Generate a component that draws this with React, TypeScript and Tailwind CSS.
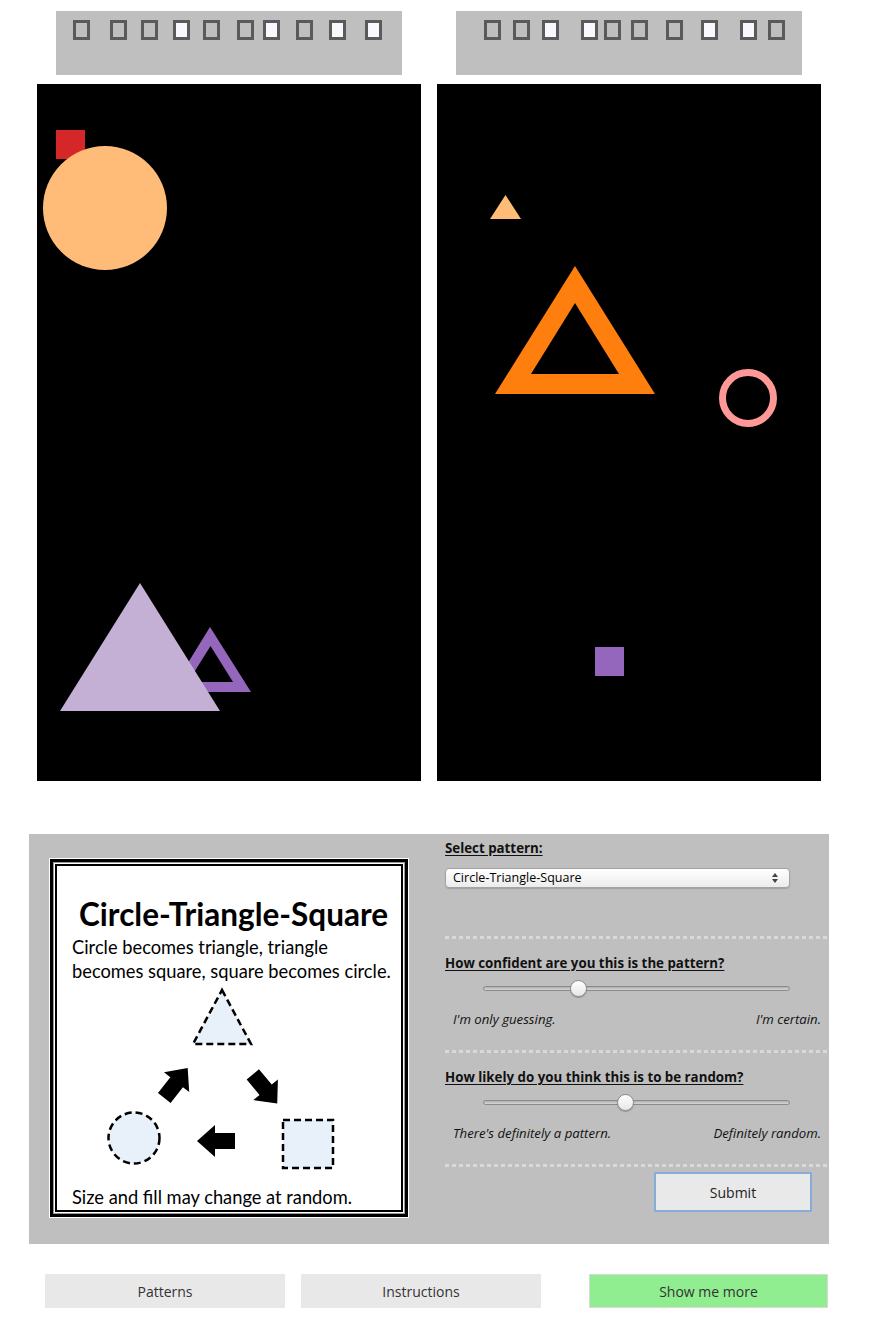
const leftMarks = [
  { ml: "ml-[17px]", on: false },
  { ml: "ml-[20px]", on: false },
  { ml: "ml-[14px]", on: false },
  { ml: "ml-[15px]", on: true },
  { ml: "ml-[13px]", on: false },
  { ml: "ml-[17px]", on: false },
  { ml: "ml-[9px]", on: true },
  { ml: "ml-[16px]", on: false },
  { ml: "ml-[16px]", on: true },
  { ml: "ml-[19px]", on: true },
]

const rightMarks = [
  { ml: "ml-[28px]", on: false },
  { ml: "ml-[12px]", on: false },
  { ml: "ml-[12px]", on: true },
  { ml: "ml-[22px]", on: true },
  { ml: "ml-[6px]", on: false },
  { ml: "ml-[10px]", on: false },
  { ml: "ml-[18px]", on: false },
  { ml: "ml-[18px]", on: true },
  { ml: "ml-[22px]", on: true },
  { ml: "ml-[11px]", on: false },
]

function MarkBar({ marks }: { marks: { ml: string; on: boolean }[] }) {
  return (
    <div className="mx-[19px] h-[64px] bg-[#bfbfbf] flex items-start pt-[9px]">
      {marks.map((m, i) => (
        <div
          key={i}
          className={`${m.ml} w-[17px] h-[20px] border-[3px] border-[#5a5a5a] ${m.on ? "bg-[#f8f8ff]" : ""}`}
        ></div>
      ))}
    </div>
  )
}

function LeftCanvas() {
  return (
    <svg className="block" width="384" height="697" viewBox="0 0 384 697">
      <rect width="384" height="697" fill="#000" />
      <rect x="19" y="46" width="29" height="29" fill="#d62728" />
      <circle cx="68" cy="124" r="62" fill="#ffbb78" />
      {/* outline triangle sits behind the filled one */}
      <polygon points="133,608 214,608 173,543" fill="#9467bd" />
      <polygon points="151,598 196,598 173.5,562" fill="#000" />
      <polygon points="23,627 183,627 103,499" fill="#c5b0d5" />
    </svg>
  )
}

function RightCanvas() {
  return (
    <svg className="block" width="384" height="697" viewBox="0 0 384 697">
      <rect width="384" height="697" fill="#000" />
      <polygon points="53,135 84,135 68.5,111" fill="#ffbb78" />
      <polygon points="58,310 218,310 138,182" fill="#ff7f0e" />
      <polygon points="94,290 182,290 138,219" fill="#000" />
      <circle cx="311" cy="314" r="25.5" fill="none" stroke="#ff9896" strokeWidth="7" />
      <rect x="158" y="563" width="29" height="29" fill="#9467bd" />
    </svg>
  )
}

function Arrow({ x, y, angle }: { x: number; y: number; angle: number }) {
  return (
    <polygon
      points="-19,-8 1,-8 1,-16 19,0 1,16 1,8 -19,8"
      fill="#000"
      transform={`translate(${x} ${y}) rotate(${angle})`}
    />
  )
}

function PatternCard() {
  return (
    <div className="w-[360px] h-[360px] bg-white p-px">
      <div className="h-full border-[3px] border-black bg-[#999] p-px">
        <div className="h-full bg-white p-px">
          <div className="h-full border-2 border-black flex flex-col font-['Lato',sans-serif] text-black">
            <div className="pl-[22px] pt-[30px] text-[31.5px] leading-[36px] font-bold whitespace-nowrap">Circle-Triangle-Square</div>
            <div className="pl-[15px] mt-[3px] text-[18.3px] leading-[24px] whitespace-nowrap">
              Circle becomes triangle, triangle
              <br />
              becomes square, square becomes circle.
            </div>
            <svg className="block mt-[2px]" width="344" height="188" viewBox="0 0 344 188">
              <g fill="#e8f0f9" stroke="#000" strokeWidth="2.5" strokeDasharray="7 4">
                <polygon points="165,5 194,59 136,59" />
                <circle cx="77" cy="153" r="25.5" />
                <rect x="226" y="135" width="50" height="48" />
              </g>
              <Arrow x={119} y={98} angle={-52} />
              <Arrow x={208} y={104} angle={50} />
              <Arrow x={159} y={156} angle={180} />
            </svg>
            <div className="pl-[15px] mt-[12px] text-[18.3px] leading-[24px] whitespace-nowrap">Size and fill may change at random.</div>
          </div>
        </div>
      </div>
    </div>
  )
}

function Dots() {
  return <div className="h-[3px] bg-[linear-gradient(90deg,#d9d9d9_4px,transparent_4px)] bg-[size:7px_3px]"></div>
}

function Slider({ pos }: { pos: string }) {
  return (
    <div className="ml-[38px] w-[307px] h-[17px] relative flex items-center">
      <div className="w-full h-[5px] rounded-full border border-[#8a8a8a] bg-gradient-to-b from-[#b0b0b0] to-[#d6d6d6]"></div>
      <div
        className={`absolute ${pos} top-0 w-[17px] h-[17px] rounded-full border border-[#8c8c8c] bg-gradient-to-b from-white to-[#e6e6e6] shadow-[0_1px_1px_rgba(0,0,0,0.25)]`}
      ></div>
    </div>
  )
}

function Question({
  title,
  pos,
  low,
  high,
}: {
  title: string
  pos: string
  low: string
  high: string
}) {
  return (
    <div className="pt-[15px]">
      <div className="text-[13.3px] leading-[18px] font-bold underline underline-offset-2 text-[#111]">{title}</div>
      <div className="mt-[8px]">
        <Slider pos={pos} />
      </div>
      <div className="mt-[13px] px-[8px] flex justify-between text-[13.2px] leading-[18px] italic text-[#111]">
        <span>{low}</span>
        <span>{high}</span>
      </div>
    </div>
  )
}

function PatternForm() {
  return (
    <div className="w-[384px] font-['Open_Sans',sans-serif]">
      <div className="text-[13.3px] leading-[18px] font-bold underline underline-offset-2 text-[#111]">Select pattern:</div>
      <div className="mt-[11px] w-[345px] h-[20px] rounded-[4px] border border-[#a3a3a3] bg-gradient-to-b from-white to-[#ececec] shadow-[0_1px_1px_rgba(0,0,0,0.15)] flex items-center justify-between pl-[7px] pr-[11px]">
        <span className="text-[12.5px] leading-[18px] text-black">Circle‑Triangle‑Square</span>
        <svg width="6" height="10" viewBox="0 0 6 10">
          <polygon points="3,0 6,4 0,4" fill="#444" />
          <polygon points="0,6 6,6 3,10" fill="#444" />
        </svg>
      </div>
      <div className="mt-[48px]">
        <Dots />
      </div>
      <Question
        title="How confident are you this is the pattern?"
        pos="left-[87px]"
        low="I'm only guessing."
        high="I'm certain."
      />
      <div className="mt-[22px]">
        <Dots />
      </div>
      <Question
        title="How likely do you think this is to be random?"
        pos="left-[134px]"
        low="There's definitely a pattern."
        high="Definitely random."
      />
      <div className="mt-[22px]">
        <Dots />
      </div>
      <div className="mt-[5px] flex justify-end pr-[17px]">
        <button className="w-[158px] h-[40px] bg-[#e9e9e9] border-2 border-[#86acd8] text-[14px] text-[#222]">Submit</button>
      </div>
    </div>
  )
}

export default function App() {
  return (
    <div className="w-[871px] h-[1327px] bg-white font-['Open_Sans',sans-serif]">
      <div className="pt-[11px] pl-[37px] flex gap-[16px]">
        <div className="w-[384px] flex flex-col gap-[9px]">
          <MarkBar marks={leftMarks} />
          <LeftCanvas />
        </div>
        <div className="w-[384px] flex flex-col gap-[9px]">
          <MarkBar marks={rightMarks} />
          <RightCanvas />
        </div>
      </div>

      <div className="mt-[53px] ml-[29px] w-[800px] h-[410px] bg-[#bfbfbf] flex pt-[24px] pl-[20px]">
        <PatternCard />
        <div className="ml-[36px] -mt-[19px]">
          <PatternForm />
        </div>
      </div>

      <div className="mt-[30px] ml-[45px] flex text-[14px] text-[#333]">
        <button className="w-[240px] h-[34px] bg-[#e8e8e8]">Patterns</button>
        <button className="ml-[16px] w-[240px] h-[34px] bg-[#e8e8e8]">Instructions</button>
        <button className="ml-[48px] w-[239px] h-[34px] bg-[#90ee90] border border-[#d8d8d8]">Show me more</button>
      </div>
    </div>
  )
}
